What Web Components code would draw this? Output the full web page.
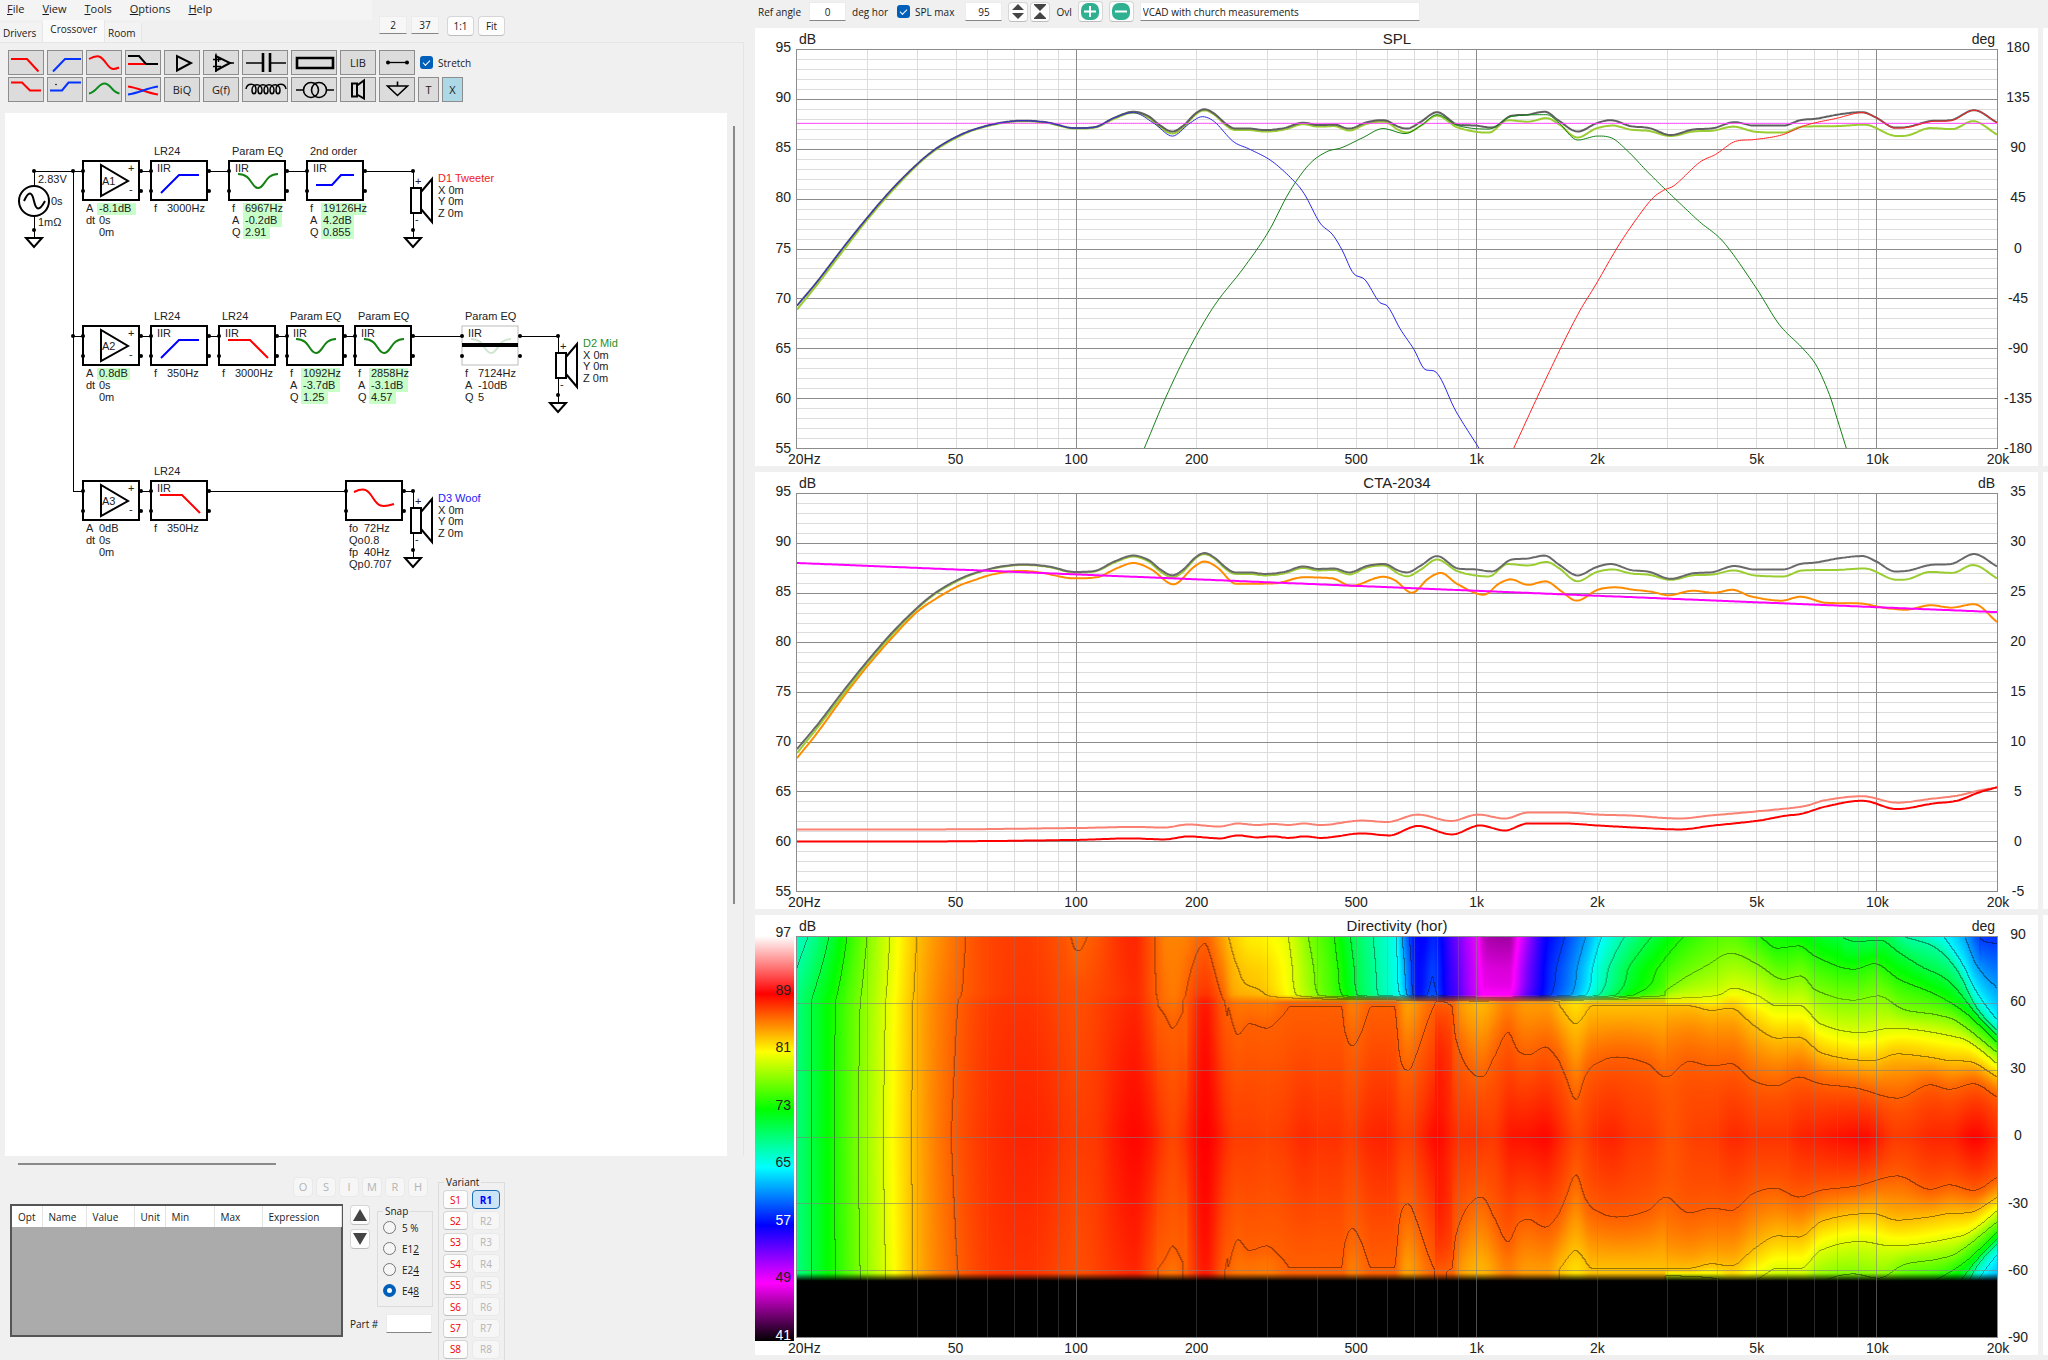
<!DOCTYPE html>
<html lang="en">
<head>
<meta charset="utf-8">
<title>Crossover designer</title>
<style>
  html, body { height: 100%; margin: 0; }
  body { background: #f0f0f0; color: #1a1a1a; font: 10px/14px "Open Sans", "Noto Sans", sans-serif; }
</style>
</head>
<body>
<app-shell>
  <app-menu slot="left"></app-menu>
  <tool-bar slot="left"></tool-bar>
  <circuit-canvas slot="left"></circuit-canvas>
  <param-panel slot="left"></param-panel>
  <chart-bar slot="right"></chart-bar>
  <chart-stack slot="right">
    <level-chart name="SPL" left="dB" right="deg" scale="180,135,90,45,0,-45,-90,-135,-180" set="spl"></level-chart>
    <level-chart name="CTA-2034" left="dB" right="dB" scale="35,30,25,20,15,10,5,0,-5" set="cta"></level-chart>
    <directivity-chart name="Directivity (hor)" left="dB" right="deg" scale="90,60,30,0,-30,-60,-90"></directivity-chart>
  </chart-stack>
</app-shell>

<script>
// styles shared by every form control
const CONTROLS = `
  :host, * { box-sizing: border-box; }
  button, input { font: inherit; color: inherit; margin: 0; }
  button { padding: 0; background: #fdfdfd; border: 1px solid #d6d6d6; border-bottom-color: #bdbdbd; border-radius: 4px; display: flex; align-items: center; justify-content: center; }
  button:disabled { color: #b4b4b4; background: #f6f6f6; border-color: #e9e9e9; }
  input[type="text"] { height: 19px; padding: 0 2px; background: #fff; border: 1px solid #ececec; border-bottom: 1px solid #868686; border-radius: 0; outline: none; min-width: 0; }
  input[type="checkbox"] { appearance: none; width: 13px; height: 13px; border-radius: 3px; background: #005fb8; display: grid; place-items: center; }
  input[type="checkbox"]::before { content: ""; width: 6px; height: 3px; border: solid #fff; border-width: 0 0 1px 1px; rotate: -45deg; translate: 0 -1px; }
  svg { display: block; }
`;

class BaseElement extends HTMLElement {
  constructor() {
    super();
    this.attachShadow({ mode: 'open' });
  }

  connectedCallback() {
    this.render();
  }

  paint(css, html) {
    this.shadowRoot.innerHTML = `<style>${CONTROLS}${css}</style>${html}`;
  }
}

// 1. Page shell: editor on the left, charts on the right
class AppShell extends BaseElement {
  render() {
    this.paint(`
      :host { display: grid; grid-template-columns: 755px minmax(0, 1fr); height: 100vh; overflow: hidden; }
      section { display: flex; flex-direction: column; min-width: 0; min-height: 0; }
    `, `
      <section><slot name="left"></slot></section>
      <section><slot name="right"></slot></section>
    `);
  }
}

// 2. Menu, tabs and zoom controls
class AppMenu extends BaseElement {
  render() {
    const menu = ['File', 'View', 'Tools', 'Options', 'Help'];
    this.paint(`
      :host { display: grid; grid-template-columns: 372px 1fr; height: 42px; }
      nav { display: flex; gap: 18px; padding: 0 7px; height: 20px; background: #f4f4f4; font-size: 11px; line-height: 18px; }
      nav a { color: inherit; text-decoration: none; }
      .tabs { display: flex; height: 22px; align-items: flex-end; }
      .tabs button { height: 19px; border: 0; border-right: 1px solid #e6e6e6; border-radius: 0; background: #f3f3f3; padding: 0 6px 0 3px; }
      .tabs button.active { height: 22px; background: #fafafa; padding: 0 7px 4px; }
      .zoom { display: flex; gap: 4px; padding: 16px 0 0 7px; }
      .zoom input { width: 28px; text-align: center; background: #f7f7f7; height: 18px; }
      .zoom button { width: 27px; height: 20px; }
      .zoom button:first-of-type { margin-left: 4px; }
    `, `
      <div>
        <nav>${menu.map(m => `<a href="#${m}"><u>${m[0]}</u>${m.slice(1)}</a>`).join('')}</nav>
        <div class="tabs">
          <button>Drivers</button><button class="active">Crossover</button><button>Room</button>
        </div>
      </div>
      <div class="zoom">
        <input type="text" value="2" aria-label="Columns"><input type="text" value="37" aria-label="Scale">
        <button>1:1</button><button>Fit</button>
      </div>
    `);
  }
}

// 3. Part palette
const RED = '#f00', BLUE = '#0432ff', GREEN = '#0a8a1a';
const ICONS = {
  lowpass: `<path d="M3 9H19L30.5 21.5" stroke="${RED}"/>`,
  highpass: `<path d="M6 21.5L18 9H34" stroke="${BLUE}"/>`,
  linkwitz: `<path d="M3 9C12 4 15 6 20 13S27 20 33 17.500" stroke="${RED}"/>`,
  bypass: `<path d="M3 14H20" stroke="${RED}"/><path d="M3 6H14L21 14H33"/>`,
  amp: `<path d="M13 6V20.500L27 13Z"/>`,
  opamp: `<path d="M13 6V20.500L27 13Z"/><path d="M10 9.500H18M10 16.500H18M15.500 7V12M26 13H31M13 3.500V22" stroke-width="1.300"/>`,
  cap: `<path d="M4 13H20M28 13H44" stroke-width="1.300"/><path d="M21 3V22M28 3V22" stroke-width="2.600"/>`,
  res: `<path d="M6 8H42V18H6Z" stroke-width="2.600"/>`,
  wire: `<path d="M9 12.500H28" stroke-width="1.300"/><circle cx="9" cy="12.500" r="1" fill="#000"/><circle cx="28" cy="12.500" r="1" fill="#000"/>`,
  lowshelf: `<path d="M3 5.500H14L22 13.500H33" stroke="${RED}"/>`,
  highshelf: `<path d="M3 13.500H15L21.500 5.500H34" stroke="${BLUE}"/><circle cx="9" cy="7.500" r=".8" fill="#000" stroke="none"/>`,
  peak: `<path d="M3 16.500C11 15 12 6.500 18.500 6.500S25 15 33.500 16.500" stroke="${GREEN}"/>`,
  tilt: `<path d="M3 9.500C14 11 22 16 33 17.500" stroke="${RED}"/><path d="M3 17.500C14 16 22 11 33 9.500" stroke="${BLUE}"/>`,
  coil: `<path d="M4 12C5 6 14 5 14 13C14 18 10 18 10 13C10 6 20 6 20 13C20 18 16 18 16 13C16 6 26 6 26 13C26 18 22 18 22 13C22 6 32 6 32 13C32 18 28 18 28 13C28 6 38 6 38 13C38 18 34 18 34 13C34 5 43 6 44 12" stroke-width="1.500"/>`,
  source: `<circle cx="20" cy="13" r="7.500" stroke-width="1.600"/><circle cx="28" cy="13" r="7.500" stroke-width="1.600"/><path d="M5 13H12.500M35.500 13H43" stroke-width="1.300"/>`,
  speaker: `<path d="M12 6.500H17V19.500H12ZM17 8.500L24 3.500V21.500L17 17.500"/>`,
  ground: `<path d="M18.500 4.500V9M8.500 9H28.500L18.500 18.500Z" stroke-width="1.600"/>`
};

class ToolBar extends BaseElement {
  tool(id) {
    const wide = ['cap', 'res', 'coil', 'source'].includes(id);
    const w = wide ? 46 : 36;
    if (!ICONS[id]) return `<button class="${id.length === 1 ? id : ''}">${id}</button>`;
    return `<button class="${wide ? 'wide' : ''}" title="${id}"><svg width="${w}" height="25" viewBox="0 0 ${w} 25">${ICONS[id]}</svg></button>`;
  }

  render() {
    const rows = [
      ['lowpass', 'highpass', 'linkwitz', 'bypass', 'amp', 'opamp', 'cap', 'res', 'LIB', 'wire'],
      ['lowshelf', 'highshelf', 'peak', 'tilt', 'BiQ', 'G(f)', 'coil', 'source', 'speaker', 'ground', 'T', 'X']
    ];
    this.paint(`
      :host { display: flex; flex-direction: column; gap: 2px; width: 744px; height: 71px; padding: 7px 0 0 8px; border: solid #e5e5e5; border-width: 1px 1px 0 0; }
      div { display: flex; gap: 3px; align-items: center; }
      button { width: 36px; height: 25px; border: 1px solid #8d8d8d; border-radius: 0; background: #dcdcdc; font-size: 11px; }
      button.wide { width: 46px; }
      button.T, button.X { width: 21px; }
      button.X { background: #add8e6; }
      svg { flex: none; fill: none; stroke: #000; stroke-width: 2; }
      input { margin: 0 2px !important; }
      label { display: flex; align-items: center; gap: 3px; }
    `, `
      <div>${rows[0].map(this.tool).join('')}<label><input type="checkbox" checked>Stretch</label></div>
      <div>${rows[1].map(this.tool).join('')}</div>
    `);
  }
}

// 4. Schematic
const GLYPHS = {
  hp: '<path d="M10 33L28 15H48" stroke="#00f"/>',
  lp: '<path d="M9 15H31L49 33" stroke="#f00"/>',
  eq: '<path d="M9 14C23 14 22 28 29 28S36 14 49 14" stroke="#128212"/>',
  shelf: '<path d="M9 25H25L34 15H47" stroke="#00f"/>',
  lt: '<path d="M8 12C19 7 22 10 27 18S35 28 48 24" stroke="#f00"/>'
};

const NODES = [
  { x: 83, y: 160, amp: 'A1', params: [['A', '-8.1dB', 1], ['dt', '0s'], ['', '0m']] },
  { x: 151, y: 160, name: 'LR24', glyph: 'hp', params: [['f', '3000Hz']] },
  { x: 229, y: 160, name: 'Param EQ', glyph: 'eq', params: [['f', '6967Hz', 1], ['A', '-0.2dB', 1], ['Q', '2.91', 1]] },
  { x: 307, y: 160, name: '2nd order', glyph: 'shelf', params: [['f', '19126Hz', 1], ['A', '4.2dB', 1], ['Q', '0.855', 1]] },
  { x: 83, y: 325, amp: 'A2', params: [['A', '0.8dB', 1], ['dt', '0s'], ['', '0m']] },
  { x: 151, y: 325, name: 'LR24', glyph: 'hp', params: [['f', '350Hz']] },
  { x: 219, y: 325, name: 'LR24', glyph: 'lp', params: [['f', '3000Hz']] },
  { x: 287, y: 325, name: 'Param EQ', glyph: 'eq', params: [['f', '1092Hz', 1], ['A', '-3.7dB', 1], ['Q', '1.25', 1]] },
  { x: 355, y: 325, name: 'Param EQ', glyph: 'eq', params: [['f', '2858Hz', 1], ['A', '-3.1dB', 1], ['Q', '4.57', 1]] },
  { x: 462, y: 325, name: 'Param EQ', glyph: 'eq', off: true, params: [['f', '7124Hz'], ['A', '-10dB'], ['Q', '5']] },
  { x: 83, y: 480, amp: 'A3', params: [['A', '0dB'], ['dt', '0s'], ['', '0m']] },
  { x: 151, y: 480, name: 'LR24', glyph: 'lp', params: [['f', '350Hz']] },
  { x: 346, y: 480, glyph: 'lt', params: [['fo', '72Hz'], ['Qo', '0.8'], ['fp', '40Hz'], ['Qp', '0.707']] }
];

const SPEAKERS = [
  { x: 413, y: 171, name: 'D1 Tweeter', color: '#f02020' },
  { x: 558, y: 336, name: 'D2 Mid', color: '#1f8f1f' },
  { x: 413, y: 491, name: 'D3 Woof', color: '#2020f0' }
];

class CircuitCanvas extends BaseElement {
  node(n) {
    const dots = [[0, 11], [0, 31], [58, 11], [58, 31]].map(([x, y]) => `<circle cx="${x}" cy="${y}" r="2"/>`).join('');
    const params = n.params.map(([key, value, tuned], i) => {
      const vx = n.glyph === 'lt' ? 18 : 16;
      const mark = tuned ? `<rect x="14" y="${43 + i * 12}" width="${value.length * 6 + 3}" height="12" fill="#c8ffc8"/>` : '';
      return `${mark}<text x="3" y="${52 + i * 12}">${key}</text><text x="${vx}" y="${52 + i * 12}">${value}</text>`;
    }).join('');
    const inside = n.amp
      ? `<path class="line" d="M18 5V36L45 21Z"/><text x="19" y="25">${n.amp}</text><text x="45" y="12">+</text><text x="46" y="33">-</text>`
      : `<g class="glyph" opacity="${n.off ? .2 : 1}">${GLYPHS[n.glyph]}</g>${n.name ? '<text x="6" y="12">IIR</text>' : ''}`;
    return `<g transform="translate(${n.x} ${n.y})">
      <rect x="0" y="1" width="56" height="39" fill="none" stroke="${n.off ? '#bbb' : '#000'}" stroke-width="${n.off ? 1 : 2}"/>
      ${dots}${n.name ? `<text x="3" y="-5">${n.name}</text>` : ''}${inside}${params}
      ${n.off ? '<path d="M0 20H56" stroke="#000" stroke-width="4"/>' : ''}
    </g>`;
  }

  speaker(s) {
    return `<g transform="translate(${s.x} ${s.y})">
      <circle r="2"/><path class="wire" d="M0 0V17M0 42V67"/>
      <path class="line" d="M-2 17H8V42H-2ZM8 21L19 8V51L8 38"/>
      <text x="2" y="14">+</text><text x="2" y="52">-</text>
      <circle cy="59" r="2"/><path class="line" d="M-8 67H8L0 76Z"/>
      <text x="25" y="11" fill="${s.color}">${s.name}</text>
      <text x="25" y="23">X 0m</text><text x="25" y="34">Y 0m</text><text x="25" y="46">Z 0m</text>
    </g>`;
  }

  render() {
    this.paint(`
      :host { display: grid; grid-template-columns: 1fr 6px 10px; flex: 1; min-height: 0; width: 744px; padding-left: 5px; border-right: 1px solid #e5e5e5; }
      .sheet { background: #fff; overflow: hidden; }
      .sheet svg { width: 100%; height: 100%; font: 11px "Liberation Sans", Arial, sans-serif; fill: #222; }
      .vbar { grid-column: 3; width: 2px; height: 778px; margin-top: 13px; background: #8a8a8a; }
      .line { fill: none; stroke: #000; stroke-width: 2; }
      .wire { fill: none; stroke: #000; stroke-width: 1; shape-rendering: crispEdges; }
      .glyph path { fill: none; stroke-width: 2; }
      circle { fill: #000; }
    `, `
      <div class="sheet"><svg role="img" aria-label="Crossover schematic"><g transform="translate(-5 -113)">
        <path class="wire" d="M34 186V171H83M73 171V491H83M73 336H83M141 171H151M209 171H229M287 171H307M365 171H413
          M141 336H151M209 336H219M277 336H287M345 336H355M413 336H462M520 336H558M141 491H151M209 491H346M404 491H413M34 216V238"/>
        <circle cx="34" cy="171" r="2"/><circle cx="73" cy="171" r="2"/><circle cx="73" cy="336" r="2"/><circle cx="34" cy="230" r="2"/>
        <circle class="line" cx="34" cy="201" r="15" style="fill:none"/>
        <path class="line" d="M24 201C29 190 32 192 34 201S39 212 45 201M26 238H42L34 247Z"/>
        <text x="38" y="183">2.83V</text><text x="51" y="205">0s</text><text x="38" y="226">1mΩ</text>
        ${NODES.map(this.node).join('')}${SPEAKERS.map(this.speaker).join('')}
      </g></svg></div>
      <div class="vbar"></div>
    `);
  }
}

// 5. Group frame with a caption, its content is slotted
class GroupBox extends BaseElement {
  render() {
    this.paint(`
      :host { display: block; }
      fieldset { margin: 0; height: 100%; min-width: 0; padding: 0 4px; border: 1px solid #dcdcdc; }
      legend { padding: 0 2px; margin-left: 1px; line-height: 12px; }
    `, `<fieldset><legend>${this.getAttribute('label')}</legend><slot></slot></fieldset>`);
  }
}

// 6. Parameter list, snap and variants
class ParamPanel extends BaseElement {
  render() {
    const cols = [['Opt', 30], ['Name', 44], ['Value', 48], ['Unit', 31], ['Min', 49], ['Max', 48], ['Expression', 79]];
    const snaps = [['5 ', '%'], ['E1', '2'], ['E2', '4'], ['E4', '8']];
    this.paint(`
      :host { display: flex; flex-direction: column; height: 204px; }
      .hbar { width: 258px; height: 2px; margin: 7px 0 0 18px; background: #8a8a8a; flex: none; }
      .row { display: flex; flex: 1; min-height: 0; padding: 12px 0 0 10px; gap: 5px; }
      .main { display: grid; grid-template-columns: 333px 20px 56px; grid-template-rows: 20px 133px; gap: 7px; align-content: start; }
      .letters { grid-column: 1 / -1; display: flex; gap: 3px; justify-content: flex-end; padding-right: 5px; font-size: 11px; }
      .letters button { width: 20px; height: 20px; }
      .grid { background: #ababab; border: 2px solid #555; }
      table { width: 100%; border-collapse: collapse; table-layout: fixed; background: #fff; }
      th { height: 21px; padding: 0 0 0 6px; font-weight: 400; text-align: left; border-right: 1px solid #e3e3e3; }
      .arrows { display: flex; flex-direction: column; gap: 4px; padding-top: 1px; }
      .arrows button { width: 20px; height: 20px; }
      .side { display: flex; flex-direction: column; gap: 7px; }
      group-box.snap { height: 102px; margin-top: 1px; width: 56px; }
      .snap label { display: flex; align-items: center; gap: 6px; height: 21px; white-space: pre; padding-left: 1px; }
      input[type="radio"] { appearance: none; width: 13px; height: 13px; border: 1px solid #777; border-radius: 50%; background: #f6f6f6; }
      input[type="radio"]:checked { border: 4px solid #005fb8; background: #fff; }
      .part { display: flex; align-items: center; justify-content: space-between; margin-left: -27px; padding-right: 1px; }
      .part input { width: 46px; }
      group-box.variant { width: 67px; height: 200px; margin-top: -1px; }
      .pairs { display: grid; grid-template-columns: 25px 28px; gap: 0 4px; height: 169px; align-content: space-between; margin-top: 2px; }
      .pairs button { height: 19px; }
      .pairs .s { color: #f00000; }
      .pairs .on { color: #00f; font-weight: 700; background: #cce4f7; border: 1px solid #1c6fb5; }
    `, `
      <div class="hbar"></div>
      <div class="row">
        <div class="main">
          <div class="letters">${[...'OSIMRH'].map(l => `<button disabled>${l}</button>`).join('')}</div>
          <div class="grid"><table><thead><tr>${cols.map(([name, w]) => `<th style="width:${w}px">${name}</th>`).join('')}</tr></thead></table></div>
          <div class="arrows">
            <button title="Up"><svg width="14" height="12"><path d="M7 0L14 12H0Z" fill="#444"/></svg></button>
            <button title="Down"><svg width="14" height="12"><path d="M7 12L14 0H0Z" fill="#444"/></svg></button>
          </div>
          <div class="side">
            <group-box class="snap" label="Snap">${snaps.map(([a, b], i) => `<label><input type="radio" name="snap" ${i === 3 ? 'checked' : ''}><span>${a}${i ? `<u>${b}</u>` : b}</span></label>`).join('')}</group-box>
            <div class="part"><label for="part">Part #</label><input id="part" type="text"></div>
          </div>
        </div>
        <group-box class="variant" label="Variant"><div class="pairs">
          ${[1, 2, 3, 4, 5, 6, 7, 8].map(n => `<button class="s">S${n}</button><button ${n === 1 ? 'class="on"' : 'disabled'}>R${n}</button>`).join('')}
        </div></group-box>
      </div>
    `);
  }
}

// 7. Controls above the charts
class ChartBar extends BaseElement {
  render() {
    this.paint(`
      :host { display: flex; align-items: center; height: 28px; flex: none; padding: 0 0 5px 3px; gap: 6px; }
      label { white-space: nowrap; display: flex; align-items: center; gap: 5px; }
      .num { width: 37px; text-align: center; }
      .angle { gap: 8px; }
      .name { width: 280px; }
      .pair { display: flex; gap: 2px; }
      .pair button { width: 20px; height: 20px; }
      .round { width: 25px; height: 21px; }
      .max { gap: 9px; padding: 0 5px 0 3px; }
      .max input[type="checkbox"] { margin-right: -4px; }
    `, `
      <label class="angle">Ref angle<input class="num" type="text" value="0"></label><span>deg hor</span>
      <label class="max"><input type="checkbox" checked>SPL max</label>
      <input class="num" type="text" value="95" aria-label="SPL max limit">
      <div class="pair">
        <button title="Shift"><svg width="12" height="15"><path d="M6 0L12 6H0ZM6 15L12 9H0Z" fill="#444"/></svg></button>
        <button title="Range"><svg width="12" height="15"><path d="M0 0H12V1L6 7L0 1ZM0 15H12V14L6 8L0 14Z" fill="#444"/></svg></button>
      </div>
      <label for="overlay">Ovl</label>
      <button class="round" title="Add overlay"><svg width="20" height="17"><rect x="1" width="18" height="17" rx="7" fill="#2fb191"/><path d="M10 3V14M4 8.500H16" stroke="#fff" stroke-width="2"/></svg></button>
      <button class="round" title="Remove overlay"><svg width="20" height="17"><rect x="1" width="18" height="17" rx="7" fill="#2fb191"/><path d="M4 8.500H16" stroke="#fff" stroke-width="2"/></svg></button>
      <input class="name" id="overlay" type="text" value="VCAD with church measurements">
    `);
  }
}

class ChartStack extends BaseElement {
  render() {
    this.paint(`
      :host { flex: 1; min-height: 0; display: grid; grid-template-columns: minmax(0, 1fr) 5px; grid-template-rows: minmax(0, 438fr) minmax(0, 437fr) minmax(0, 440fr); gap: 6px 5px; padding-bottom: 5px; }
      ::slotted(*) { grid-column: 1; min-height: 0; }
      i { grid-column: 2; background: #fff; }
      i:nth-of-type(1) { grid-row: 1; }
      i:nth-of-type(2) { grid-row: 2; }
      i:nth-of-type(3) { grid-row: 3; }
    `, '<slot></slot><i></i><i></i><i></i>');
  }
}

// monotone cubic through [x, y, x, y, ...]
function spline(flat) {
  const n = flat.length / 2, xs = [], ys = [], d = [], m = [];
  for (let i = 0; i < n; i++) { xs.push(flat[2 * i]); ys.push(flat[2 * i + 1]); }
  for (let i = 0; i < n - 1; i++) d.push((ys[i + 1] - ys[i]) / (xs[i + 1] - xs[i] || 1));
  for (let i = 0; i < n; i++) {
    if (i === 0 || i === n - 1) m.push(d[Math.min(i, n - 2)]);
    else if (d[i - 1] * d[i] <= 0) m.push(0);
    else {
      const mean = (ys[i + 1] - ys[i - 1]) / (xs[i + 1] - xs[i - 1]);
      m.push(Math.sign(mean) * Math.min(Math.abs(mean), 3 * Math.abs(d[i - 1]), 3 * Math.abs(d[i])));
    }
  }
  const f = x => {
    if (x <= xs[0]) return ys[0];
    if (x >= xs[n - 1]) return ys[n - 1];
    let i = 0;
    while (x > xs[i + 1]) i++;
    const h = xs[i + 1] - xs[i], t = (x - xs[i]) / h, u = 1 - t;
    return u * u * (1 + 2 * t) * ys[i] + u * u * t * h * m[i] + t * t * (3 - 2 * t) * ys[i + 1] - t * t * u * h * m[i + 1];
  };
  f.from = xs[0];
  f.to = xs[n - 1];
  return f;
}

// curves: x on the 1202 unit wide log axis, y in dB
const W = 1202, H = 400;
const LOW = [0, 69.3, 20, 71.7, 46, 75.1, 70, 78.1, 95, 81, 120, 83.5, 138, 85, 159, 86.25, 177, 87, 202, 87.65, 227, 87.9, 252, 87.7, 278, 87.15, 298, 87.25, 318, 88.2];
const ON_AXIS = [...LOW, 337, 88.8, 352, 88.35, 364, 87.4, 376, 86.8, 387, 87.4, 399, 88.6, 408, 89.05, 418, 88.6, 430, 87.55, 439, 87.1, 453, 87.1, 468, 86.95, 488, 87.15, 507, 87.7, 522, 87.45, 538, 87.5, 553, 87.1, 571, 87.75, 588, 87.95, 602, 87.3, 611, 87.1, 625, 87.8, 641, 88.75, 662, 87.5, 680, 87.4, 696, 87.2, 716, 88.4, 732, 88.5, 749, 88.8, 763, 87.9, 782, 86.8, 800, 87.6, 815, 87.95, 835, 87.35, 854, 87.15, 875, 86.45, 897, 87, 918, 87.15, 939, 87.75, 959, 87.4, 988, 87.4, 1005, 87.95, 1021, 88.1, 1042, 88.5, 1067, 88.75, 1081, 88.2, 1100, 87.2, 1114, 87.3, 1135, 87.85, 1156, 87.95, 1179, 88.95, 1202, 87.7];
const WINDOW = [0, 68.9, 20, 71.4, 46, 74.8, 70, 77.9, 95, 80.8, 120, 83.4, 138, 84.9, 159, 86.15, 177, 86.95, 202, 87.6, 227, 87.85, 252, 87.65, 278, 87.1, 298, 87.2, 318, 88.1, 337, 88.7, 352, 88.2, 364, 87.2, 376, 86.6, 387, 87.2, 399, 88.5, 408, 88.95, 418, 88.5, 430, 87.4, 439, 86.95, 453, 86.95, 468, 86.8, 488, 87, 507, 87.55, 522, 87.3, 538, 87.35, 553, 86.9, 571, 87.6, 588, 87.8, 602, 87, 611, 86.7, 625, 87.4, 641, 88.4, 662, 87.2, 693, 86.7, 712, 87.95, 732, 87.8, 751, 88.15, 763, 87.55, 782, 86.2, 800, 87.1, 817, 87.4, 835, 87, 854, 86.85, 875, 86.35, 897, 86.8, 918, 86.9, 938, 87.3, 959, 86.8, 988, 86.7, 1007, 87.3, 1042, 87.35, 1069, 87.5, 1102, 86.35, 1114, 86.45, 1135, 87.15, 1157, 87.05, 1178, 87.85, 1202, 86.5];
const WOOFER = [...LOW, 337, 88.7, 358, 87.6, 376, 86.35, 393, 87.6, 406, 88.3, 418, 87.8, 437, 85.8, 453, 85.05, 476, 83.8, 500, 81.6, 509, 80.4, 524, 77.6, 536, 76.5, 546, 74.9, 557, 72.6, 569, 71.9, 583, 69.7, 592, 69.2, 604, 67, 618, 64.9, 629, 62.9, 639, 62.7, 660, 58.7, 683, 55];
const MID = [348, 55, 369, 60, 393, 65, 418, 69.3, 447, 73.05, 472, 76.7, 493, 80.7, 513, 83.5, 530, 84.75, 546, 85.2, 567, 86.2, 587, 87.1, 609, 86.6, 625, 87.4, 641, 88.5, 662, 87.4, 693, 87.05, 715, 88.3, 751, 88.5, 763, 87.7, 782, 85.95, 802, 86.35, 815, 86.2, 833, 84.75, 852, 82.75, 879, 80.1, 904, 77.75, 928, 75.7, 961, 71.05, 984, 67.4, 1007, 65.05, 1021, 63.3, 1034, 60.4, 1042, 57.9, 1051, 55];
const TWEETER = [718, 55, 753, 62.55, 782, 68.4, 800, 71.4, 822, 75.2, 840, 77.9, 857, 80.1, 868, 80.9, 879, 81.4, 904, 83.7, 920, 84.5, 941, 85.85, 959, 86, 986, 86.45, 1011, 87.45, 1042, 88.15, 1067, 88.7, 1081, 88.2, 1100, 87.15, 1114, 87.25, 1135, 87.8, 1156, 87.9, 1179, 88.95, 1202, 87.7];
const ROOM = [0, 68.4, 20, 70.9, 46, 74.5, 70, 77.6, 95, 80.5, 120, 83.1, 140, 84.5, 161, 85.7, 177, 86.3, 196, 86.9, 223, 87.25, 243, 87.1, 278, 86.5, 300, 86.6, 320, 87.5, 337, 88.05, 355, 87.4, 377, 85.9, 397, 87.6, 408, 88.2, 421, 87.6, 440, 85.95, 479, 86, 507, 86.6, 536, 86.5, 555, 85.75, 587, 86.65, 599, 86.3, 616, 85.05, 632, 86.45, 645, 87.05, 661, 85.95, 688, 84.85, 703, 85.95, 715, 86.4, 732, 85.85, 750, 86.2, 765, 85.25, 781, 84.25, 802, 85.35, 820, 85.6, 838, 85.35, 856, 85.15, 873, 84.8, 897, 85.25, 918, 85.05, 937, 85.35, 955, 84.7, 986, 84.25, 1005, 84.65, 1030, 84.05, 1067, 83.95, 1088, 83.55, 1111, 83.35, 1136, 83.8, 1156, 83.55, 1179, 83.9, 1202, 82.1];
const DI_UPPER = [0, 61.2, 127, 61.2, 281, 61.35, 337, 61.45, 368, 61.4, 392, 61.7, 423, 61.5, 442, 61.8, 460, 61.65, 477, 61.75, 492, 61.65, 508, 61.8, 525, 61.65, 566, 62.1, 591, 61.95, 622, 62.7, 655, 62.05, 682, 62.7, 709, 62.3, 732, 62.9, 769, 62.9, 802, 62.7, 835, 62.6, 885, 62.3, 914, 62.6, 959, 63, 1009, 63.55, 1030, 64.15, 1067, 64.55, 1102, 63.9, 1137, 64.3, 1162, 64.6, 1183, 65.1, 1202, 65.45];
const DI_LOWER = [0, 60, 127, 60, 281, 60.15, 334, 60.3, 368, 60.2, 392, 60.5, 423, 60.3, 442, 60.6, 461, 60.4, 477, 60.5, 492, 60.35, 508, 60.5, 525, 60.35, 566, 60.8, 593, 60.6, 622, 61.55, 656, 60.7, 684, 61.6, 709, 61.1, 732, 61.8, 769, 61.8, 802, 61.6, 839, 61.4, 885, 61.2, 914, 61.55, 964, 62.1, 988, 62.55, 1007, 62.8, 1030, 63.5, 1067, 64.1, 1102, 63.25, 1137, 63.8, 1162, 64.1, 1183, 64.9, 1202, 65.45];

const CURVES = {
  spl: [
    [WINDOW, '#9acd32', 2], [ON_AXIS, '#606060', 2], [[0, 87.63, W, 87.63], '#ff40ff', 1],
    [WOOFER, '#2a2ae8', 1], [MID, '#148014', 1], [TWEETER, '#f22', 1]
  ],
  cta: [
    [ROOM, '#ff8c00', 2], [WINDOW, '#9acd32', 2], [ON_AXIS, '#696969', 2], [DI_UPPER, '#fa8072', 2],
    [DI_LOWER, '#f00', 2], [[0, 88.05, W, 83.1], '#f0f', 2]
  ]
};

const TICKS = [[20, '20Hz'], [50, '50'], [100, '100'], [200, '200'], [500, '500'], [1000, '1k'], [2000, '2k'], [5000, '5k'], [10000, '10k'], [20000, '20k']];
const percent = hz => (Math.log10(hz / 20) / 3 * 100).toFixed(3) + '%';

// 8. Common chart frame: units, title, scales and frequency axis
class ChartFrame extends BaseElement {
  verticals(minor, major) {
    let out = '';
    for (const dec of [10, 100, 1000, 10000]) {
      for (let k = 1; k < 10; k++) {
        const hz = dec * k;
        if (hz <= 20 || hz >= 20000) continue;
        out += `<line x1="${percent(hz)}" x2="${percent(hz)}" y1="0" y2="100%" stroke="${k === 1 ? major : minor}"/>`;
      }
    }
    return out;
  }

  render() {
    const right = this.getAttribute('scale').split(',');
    this.paint(`
      :host { display: grid; grid-template-columns: 41px minmax(0, 1fr) 40px; grid-template-rows: 21px minmax(0, 1fr) 17px; background: #fff; font: 14px/16px "Liberation Sans", Arial, sans-serif; color: #222; }
      header { grid-column: 2; display: grid; grid-template-columns: 1fr auto 1fr; align-items: end; padding: 0 3px 2px; }
      header h2 { margin: 0; font-size: 15px; font-weight: 400; line-height: 16px; }
      header span:last-child { text-align: right; }
      .left, .right { display: grid; grid-row: 2; }
      .scale { display: flex; flex-direction: column; justify-content: space-between; margin: -10px 0 -7px; }
      .left .scale { align-items: flex-end; padding-right: 5px; }
      .right .scale { align-items: center; }
      .plot { grid-row: 2; grid-column: 2; display: grid; grid-template-rows: minmax(0, 1fr); min-height: 0; border: 1px solid #8c8c8c; }
      .plot > * { grid-area: 1 / 1; width: 100%; height: 100%; min-height: 0; }
      .axis { grid-row: 3; grid-column: 2; width: 100%; height: 17px; overflow: visible; fill: #222; }
      line { shape-rendering: crispEdges; }
      ${this.extraStyle || ''}
    `, `
      <header><span>${this.getAttribute('left')}</span><h2>${this.getAttribute('name')}</h2><span>${this.getAttribute('right')}</span></header>
      <div class="left"><div class="scale">${this.leftScale().map(v => `<span>${v}</span>`).join('')}</div></div>
      <div class="plot">${this.plot()}</div>
      <div class="right"><div class="scale">${right.map(v => `<span>${v}</span>`).join('')}</div></div>
      <svg class="axis">${TICKS.map(([hz, label], i) => `<text x="${i ? percent(hz) : -8}" y="15" text-anchor="${i ? 'middle' : 'start'}">${label}</text>`).join('')}</svg>
    `);
  }
}

class LevelChart extends ChartFrame {
  leftScale() {
    return [95, 90, 85, 80, 75, 70, 65, 60, 55];
  }

  curve([points, color, width]) {
    const f = spline(points);
    let d = '';
    for (let x = f.from; x <= f.to; x += 2) d += `${d ? 'L' : 'M'}${x} ${((95 - f(x)) * 10).toFixed(1)}`;
    d += `L${f.to} ${((95 - f(f.to)) * 10).toFixed(1)}`;
    return `<path d="${d}" stroke="${color}" stroke-width="${width}" vector-effect="non-scaling-stroke"/>`;
  }

  plot() {
    let rows = '';
    for (let db = 1; db < 40; db++) {
      if (db % 5) rows += `<line x1="0" x2="100%" y1="${db * 2.5}%" y2="${db * 2.5}%" stroke="#dcdcdc"/>`;
    }
    let majors = '';
    for (let db = 5; db < 40; db += 5) majors += `<line x1="0" x2="100%" y1="${db * 2.5}%" y2="${db * 2.5}%" stroke="#8c8c8c"/>`;
    return `
      <svg>${rows}${this.verticals('#dcdcdc', '#8c8c8c')}${majors}</svg>
      <svg viewBox="0 0 ${W} ${H}" preserveAspectRatio="none" fill="none">${CURVES[this.getAttribute('set')].map(this.curve).join('')}</svg>
    `;
  }
}

// 9. Directivity map
const PALETTE = [[41, 0, 0, 0], [49, 255, 0, 255], [57, 0, 0, 255], [65, 0, 255, 255], [73, 0, 255, 0], [81, 255, 255, 0], [89, 255, 0, 0], [97, 255, 255, 255]];

// level curves: angle against x
const ISO = {
  86: [360, 60, 368, 55, 376, 49, 386, 56, 392, 60, 400, 60.5, 430, 60, 437, 50, 441, 46, 453, 51, 470, 49, 485, 54, 495, 58.9, 545, 58.9, 549, 47, 556, 41, 565, 47, 576, 58.9, 598, 58.9, 604, 36, 612, 30, 620, 37, 634, 55, 641, 60.2, 655, 60, 660, 44, 672, 31, 686, 27, 698, 36, 712, 47, 722, 39, 732, 37, 749, 40.5, 762, 35, 769, 28, 780, 17, 790, 28, 800, 33, 821, 36, 852, 33, 870, 27, 893, 34, 916, 32, 935, 33, 957, 25.5, 980, 23, 1003, 27, 1025, 24, 1061, 22, 1102, 17.5, 1135, 23.5, 1154, 21.5, 1178, 24, 1202, 18],
  83: [764, 59, 780, 51, 787, 54, 796, 59, 893, 59, 916, 57, 935, 58, 959, 50, 982, 44.5, 1003, 45, 1027, 37.7, 1077, 34.4, 1102, 37.4, 1133, 36, 1154, 34.4, 1174, 34, 1202, 27],
  80: [870, 62.2, 922, 63.8, 937, 67, 963, 63.5, 982, 59, 1005, 59, 1025, 51, 1065, 47, 1096, 49, 1164, 44.7, 1180, 41, 1202, 33],
  77: [870, 66, 890, 72, 910, 77, 935, 82.7, 961, 78, 988, 71, 1005, 72.5, 1021, 66, 1058, 61.6, 1083, 63.5, 1108, 57.5, 1141, 55, 1162, 52, 1202, 38],
  74: [965, 90, 982, 85, 1003, 86, 1021, 81, 1058, 75.5, 1079, 78, 1104, 71, 1141, 64, 1170, 56, 1202, 42.5],
  71: [1048, 89.5, 1060, 88, 1085, 88.5, 1104, 83, 1125, 77, 1154, 70, 1182, 55, 1202, 45.5],
  68: [1110, 90, 1141, 85, 1162, 75, 1182, 58, 1202, 48],
  65: [1149, 90, 1166, 79, 1182, 65, 1202, 52.5],
  62: [1170, 90, 1182, 77, 1202, 67],
  59: [1183, 90, 1190, 88, 1202, 87]
};
const AT_60 = [0, 69.1, 36, 73.7, 70, 77.8, 120, 83.4, 159, 85.9, 202, 87.3, 227, 87.4, 281, 86.6, 318, 87.4, 337, 87.8, 352, 86.8, 364, 85.8, 376, 85.4, 390, 86.3, 408, 88.2, 425, 86.3, 437, 85.4, 453, 85.2, 470, 85.1, 488, 85.7, 500, 85.9, 545, 85.9, 555, 85, 576, 85.9, 596, 85.9, 611, 83.9, 630, 85.3, 641, 86, 655, 85.8, 665, 84, 685, 83.2, 712, 84.8, 730, 84, 750, 84, 763, 82.95, 780, 81.8, 798, 82.9, 870, 82.9];
const AT_64 = [0, 69, 36, 73.5, 70, 77.7, 120, 83.3, 159, 85.8, 227, 87.3, 281, 86.6, 318, 87.2, 337, 87.6, 360, 86, 376, 85.2, 408, 87.4, 425, 86, 437, 84, 470, 83, 500, 80, 522, 77, 546, 74, 561, 71, 582, 68, 604, 65, 611, 62, 622, 57.5, 636, 59.7, 650, 56.5, 662, 54.5, 675, 51.5, 688, 49.3, 712, 49.3, 730, 54, 745, 57, 755, 59, 775, 62, 790, 65, 803, 68, 820, 71, 838, 74, 870, 76.8];
const AT_90 = [0, 66.9, 11, 68, 32, 71, 50, 74, 70, 77, 93, 80, 120, 83, 169, 86, 202, 87, 227, 87.1, 265, 86.4, 281, 85.8, 296, 86.2, 337, 87.8, 350, 86.8, 358, 86, 370, 84.9, 385, 84.9, 408, 85.8, 425, 84, 432, 83, 450, 81.6, 465, 81.3, 492, 80, 512, 77, 538, 74, 554, 71, 577, 68, 600, 65, 606, 62, 612, 59.5, 618, 57.5, 627, 57, 637, 58, 645, 57, 655, 54.5, 670, 51.5, 680, 49.5, 690, 46.5, 712, 46, 722, 49, 735, 53, 748, 56.5, 760, 58, 769, 59, 790, 62, 806, 65, 829, 68, 856, 71, 889, 74, 935, 75.8, 965, 74, 1003, 73, 1048, 71, 1085, 70.8, 1110, 68, 1149, 65, 1170, 62, 1183, 59.2, 1202, 58.4];

class DirectivityChart extends ChartFrame {
  get extraStyle() {
    const stops = [...PALETTE].reverse().map(p => `rgb(${p.slice(1)})`).join(', ');
    return `
      .left { margin: 0 2px -3px 0; background: linear-gradient(${stops}); }
      .left .scale { margin: -12px 0 -2px; padding-right: 3px; }
      .left span:nth-child(6), .left span:nth-child(8) { color: #fff; }
    `;
  }

  leftScale() {
    return [97, 89, 81, 73, 65, 57, 49, 41];
  }

  plot() {
    const rows = [1, 2, 3, 4, 5].map(i => `<line x1="0" x2="100%" y1="${i * 100 / 6}%" y2="${i * 100 / 6}%" stroke="#80808099"/>`).join('');
    return `<canvas width="${W}" height="${H}"></canvas><svg>${this.verticals('#80808050', '#80808099')}${rows}</svg>`;
  }

  connectedCallback() {
    this.render();
    this.drawMap(this.shadowRoot.querySelector('canvas').getContext('2d'));
  }

  color(level) {
    let i = 0;
    while (i < PALETTE.length - 2 && level > PALETTE[i + 1][0]) i++;
    const a = PALETTE[i], b = PALETTE[i + 1];
    const t = Math.min(1, Math.max(0, (level - a[0]) / (b[0] - a[0])));
    return [1, 2, 3].map(k => a[k] + (b[k] - a[k]) * t);
  }

  field() {
    const axis = spline(ON_AXIS), at60 = spline(AT_60), at64 = spline(AT_64), at90 = spline(AT_90);
    const iso = Object.keys(ISO).map(Number).sort((a, b) => b - a).map(level => [level, spline(ISO[level])]);
    const columns = [];
    for (let x = 0; x < W; x++) {
      const top = axis(x);
      const pts = [0, top];
      for (const [level, f] of iso) {
        if (x < f.from || x > f.to || level >= top) continue;
        const a = f(x);
        if (x < 870 && a > 59.5) continue;
        if (a > pts[pts.length - 2] + 1 && a < 90) pts.push(a, level);
      }
      if (x < 870) {
        const [angle, level] = pts.slice(-2);
        const v60 = at60(x), v64 = at64(x), v90 = at90(x);
        if (angle > 0 && angle < 56) pts.push(57, level + (v60 - level) * (57 - angle) / (61 - angle));
        pts.push(61, v60, 64, v64, 77, (v64 + v90) / 2, 90.5, v90);
      } else {
        pts.push(90.5, at90(x));
      }
      const f = spline(pts);
      const col = new Float32Array(H + 1);
      for (let y = 0; y <= H; y++) {
        const angle = 90 - y * 180 / H;
        col[y] = f(angle < 0 ? Math.min(x < 870 ? 60.5 : 64, -angle) : angle);
      }
      columns.push(col);
    }
    return columns;
  }

  drawMap(ctx) {
    const cols = this.field();
    const image = ctx.createImageData(W, H);
    const band = v => Math.min(29, Math.max(19, Math.floor((v + 1) / 3)));
    // rows between which the step near 60 degrees is blended
    const above = 57, under = 65;
    for (let y = 0; y < H; y++) {
      const angle = 90 - y * 180 / H;
      const fade = Math.min(1, Math.max(0, (angle + 64.5) / 3.5));
      for (let x = 0; x < W; x++) {
        const v = cols[x][y], next = cols[Math.min(W - 1, x + 1)][y], below = cols[x][y + 1];
        const edge = band(v) !== band(next) || band(v) !== band(below);
        let rgb = this.color(v);
        let dark = .6;
        if (y > above && y < under) {
          const t = (y - above) / (under - above);
          const a = this.color(cols[x][above]), b = this.color(cols[x][under]);
          rgb = a.map((c, k) => c + (b[k] - c) * t);
          dark = .7;
        }
        const shade = fade * (edge ? dark : 1);
        const o = (y * W + x) * 4;
        image.data[o] = rgb[0] * shade;
        image.data[o + 1] = rgb[1] * shade;
        image.data[o + 2] = rgb[2] * shade;
        image.data[o + 3] = 255;
      }
    }
    ctx.putImageData(image, 0, 0);
  }
}

customElements.define('app-shell', AppShell);
customElements.define('app-menu', AppMenu);
customElements.define('tool-bar', ToolBar);
customElements.define('circuit-canvas', CircuitCanvas);
customElements.define('group-box', GroupBox);
customElements.define('param-panel', ParamPanel);
customElements.define('chart-bar', ChartBar);
customElements.define('chart-stack', ChartStack);
customElements.define('level-chart', LevelChart);
customElements.define('directivity-chart', DirectivityChart);
</script>
</body>
</html>
